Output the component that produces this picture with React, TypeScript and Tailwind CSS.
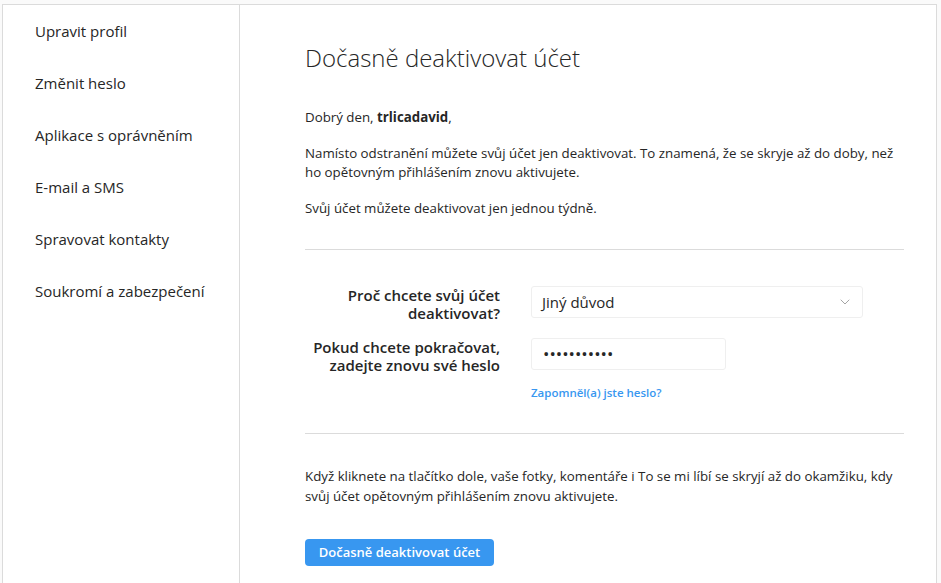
import { ChevronDown } from 'lucide-react'

const menu = [
  'Upravit profil',
  'Změnit heslo',
  'Aplikace s oprávněním',
  'E-mail a SMS',
  'Spravovat kontakty',
  'Soukromí a zabezpečení',
]

export default function App() {
  return (
    <div
      className="h-[583px] w-[941px] overflow-hidden bg-[#fafafa] pl-[2px] pt-[4px] text-[#262626]"
      style={{ fontFamily: '"Open Sans", "Noto Sans", sans-serif' }}
    >
      <div className="flex h-[600px] w-[935px] border border-[#dbdbdb] bg-white">
        {/* sidebar */}
        <nav className="w-[237px] shrink-0 border-r border-[#dbdbdb]">
          {menu.map((item) => (
            <div key={item} className="flex h-[52px] items-center pl-[32px] text-[15px]">
              {item}
            </div>
          ))}
        </nav>

        {/* main */}
        <main className="flex-1 pl-[65px] pr-[32px] pt-[38px]">
          <h1 className="text-[24px] leading-[30px] font-light">Dočasně deaktivovat účet</h1>

          <div className="mt-[35px] text-[13.3px] leading-[19px]">
            <p>
              Dobrý den, <span className="font-bold">trlicadavid</span>,
            </p>
            <p className="mt-[17px]">
              Namísto odstranění můžete svůj účet jen deaktivovat. To znamená, že se skryje až do doby, než ho
              opětovným přihlášením znovu aktivujete.
            </p>
            <p className="mt-[17px]">Svůj účet můžete deaktivovat jen jednou týdně.</p>
          </div>

          <div className="mt-[31px] h-px bg-[#dbdbdb]" />

          <div className="mt-[36px] flex items-start gap-[31px]">
            <label className="w-[195px] text-right text-[15px] leading-[18px] font-semibold">
              Proč chcete svůj účet deaktivovat?
            </label>
            <div className="flex h-[32px] w-[332px] items-center justify-between rounded-[3px] border border-[#efefef] pl-[10px] pr-[9px] text-[15px]">
              <span>Jiný důvod</span>
              <ChevronDown className="h-[16px] w-[16px] text-[#8e8e8e]" strokeWidth={1.2} />
            </div>
          </div>

          <div className="mt-[16px] flex items-start gap-[31px]">
            <label className="w-[195px] text-right text-[15px] leading-[18px] font-semibold">
              Pokud chcete pokračovat, zadejte znovu své heslo
            </label>
            <div>
              <div className="flex h-[32px] w-[195px] items-center rounded-[3px] border border-[#efefef] pl-[11px] text-[17px]">
                •••••••••••
              </div>
              <a className="mt-[15px] block text-[11.5px] leading-[16px] font-semibold text-[#3897f0]">
                Zapomněl(a) jste heslo?
              </a>
            </div>
          </div>

          <div className="mt-[32px] h-px bg-[#dbdbdb]" />

          <p className="mt-[32px] text-[13.3px] leading-[20px]">
            Když kliknete na tlačítko dole, vaše fotky, komentáře i To se mi líbí se skryjí až do okamžiku, kdy svůj
            účet opětovným přihlášením znovu aktivujete.
          </p>

          <button className="mt-[33px] h-[27px] w-[189px] rounded-[4px] bg-[#3897f0] text-[13px] font-semibold text-white">
            Dočasně deaktivovat účet
          </button>
        </main>
      </div>
    </div>
  )
}
